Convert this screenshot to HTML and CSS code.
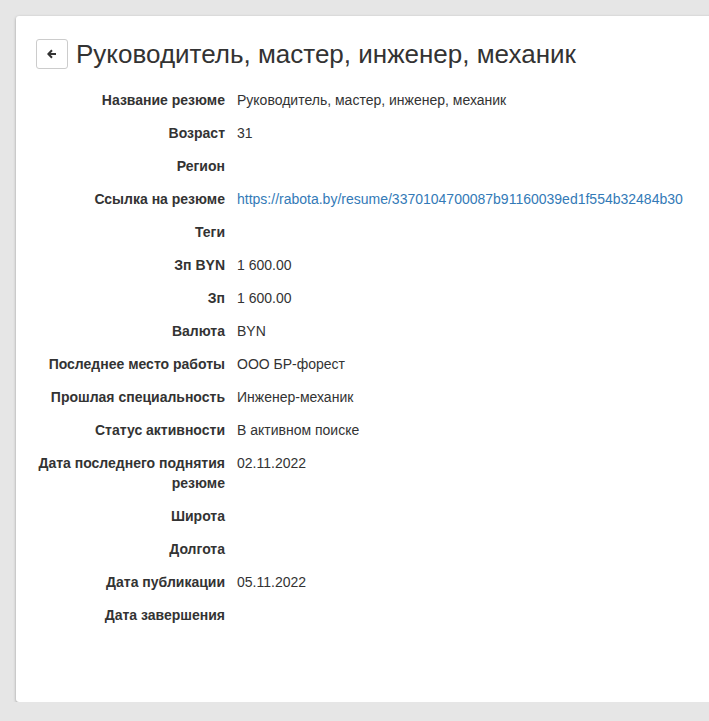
FILE: index.html
```html
<!DOCTYPE html>
<html lang="ru">

<head>
    <meta charset="UTF-8">
    <meta name="viewport" content="width=device-width, initial-scale=1.0">
    <title>Резюме</title>
    <link rel="stylesheet" href="styles.css">
</head>

<body>
    <div class="card">
        <div class="page-header">
            <button class="back-btn" type="button" title="Назад">
                <svg width="10" height="10" viewBox="0 0 10 10">
                    <path d="M5 1.2 1.3 5 5 8.8M1.6 5H9" fill="none" stroke="#333" stroke-width="2"/>
                </svg>
            </button>
            <h1>Руководитель, мастер, инженер, механик</h1>
        </div>

        <!-- Resume details -->
        <div class="details">
            <div class="row"><div class="label">Название резюме</div><div class="value">Руководитель, мастер, инженер, механик</div></div>
            <div class="row"><div class="label">Возраст</div><div class="value">31</div></div>
            <div class="row"><div class="label">Регион</div><div class="value"></div></div>
            <div class="row"><div class="label">Ссылка на резюме</div><div class="value"><a href="#">https://rabota.by/resume/3370104700087b91160039ed1f554b32484b30</a></div></div>
            <div class="row"><div class="label">Теги</div><div class="value"></div></div>
            <div class="row"><div class="label">Зп BYN</div><div class="value">1 600.00</div></div>
            <div class="row"><div class="label">Зп</div><div class="value">1 600.00</div></div>
            <div class="row"><div class="label">Валюта</div><div class="value">BYN</div></div>
            <div class="row"><div class="label">Последнее место работы</div><div class="value">ООО БР-форест</div></div>
            <div class="row"><div class="label">Прошлая специальность</div><div class="value">Инженер-механик</div></div>
            <div class="row"><div class="label">Статус активности</div><div class="value">В активном поиске</div></div>
            <div class="row"><div class="label">Дата последнего поднятия резюме</div><div class="value">02.11.2022</div></div>
            <div class="row"><div class="label">Широта</div><div class="value"></div></div>
            <div class="row"><div class="label">Долгота</div><div class="value"></div></div>
            <div class="row"><div class="label">Дата публикации</div><div class="value">05.11.2022</div></div>
            <div class="row"><div class="label">Дата завершения</div><div class="value"></div></div>
        </div>
    </div>
</body>

</html>
```

FILE: styles.css
```css
html,
body {
    overflow: hidden;
}

body {
    font-family: "Liberation Sans", Arial, sans-serif;
    font-size: 14px;
    line-height: 20px;
    color: #333;
    background-color: #e6e6e6;
    margin: 0;
    padding: 16px 0 0 16px;
}

.card {
    background-color: #fff;
    width: 760px;
    height: 686px;
    box-sizing: border-box;
    padding: 23px 20px 0 20px;
    border-radius: 3px;
    box-shadow: 0 1px 3px rgba(0, 0, 0, 0.35);
}

.page-header {
    display: flex;
    align-items: center;
    gap: 8px;
    height: 30px;
}

.back-btn {
    width: 32px;
    height: 30px;
    padding: 0;
    background-color: #fff;
    border: 1px solid #ccc;
    border-radius: 3px;
    display: flex;
    align-items: center;
    justify-content: center;
    cursor: pointer;
}

h1 {
    margin: 0;
    font-size: 26px;
    font-weight: normal;
    line-height: 30px;
    color: #333;
}

.details {
    margin-top: 21px;
}

.row {
    display: flex;
    gap: 12px;
    margin-bottom: 13px;
}

.label {
    width: 189px;
    flex-shrink: 0;
    text-align: right;
    font-weight: bold;
}

.value a {
    color: #337ab7;
    text-decoration: none;
}
```
